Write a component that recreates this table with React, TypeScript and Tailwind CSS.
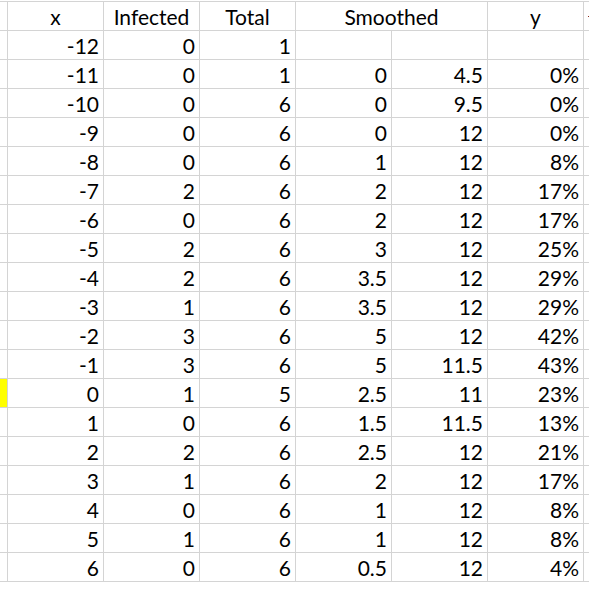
const rows: [number, number, number, string, string, string][] = [
  [-12, 0, 1, '', '', ''],
  [-11, 0, 1, '0', '4.5', '0%'],
  [-10, 0, 6, '0', '9.5', '0%'],
  [-9, 0, 6, '0', '12', '0%'],
  [-8, 0, 6, '1', '12', '8%'],
  [-7, 2, 6, '2', '12', '17%'],
  [-6, 0, 6, '2', '12', '17%'],
  [-5, 2, 6, '3', '12', '25%'],
  [-4, 2, 6, '3.5', '12', '29%'],
  [-3, 1, 6, '3.5', '12', '29%'],
  [-2, 3, 6, '5', '12', '42%'],
  [-1, 3, 6, '5', '11.5', '43%'],
  [0, 1, 5, '2.5', '11', '23%'],
  [1, 0, 6, '1.5', '11.5', '13%'],
  [2, 2, 6, '2.5', '12', '21%'],
  [3, 1, 6, '2', '12', '17%'],
  [4, 0, 6, '1', '12', '8%'],
  [5, 1, 6, '1', '12', '8%'],
  [6, 0, 6, '0.5', '12', '4%'],
];

function Cell({ value }: { value: string | number }) {
  return (
    <div className="w-[96px] shrink-0 border-r border-[#d4d4d4] flex items-center justify-end pr-[4px] pt-px">
      {value}
    </div>
  );
}

export default function App() {
  return (
    <div
      className="w-[589px] h-[589px] overflow-hidden bg-white text-black text-[21px]"
      style={{ fontFamily: 'Lato, "Open Sans", sans-serif' }}
    >
      <div className="h-px" />
      {/* header row */}
      <div className="flex h-[30px] border-t border-b border-[#d4d4d4]">
        <div className="w-[8px] shrink-0 border-r border-[#d4d4d4]" />
        <div className="w-[96px] shrink-0 border-r border-[#d4d4d4] flex items-center justify-center pt-px">x</div>
        <div className="w-[96px] shrink-0 border-r border-[#d4d4d4] flex items-center justify-center pt-px">Infected</div>
        <div className="w-[96px] shrink-0 border-r border-[#d4d4d4] flex items-center justify-center pt-px">Total</div>
        <div className="w-[192px] shrink-0 border-r border-[#d4d4d4] flex items-center justify-center pt-px">Smoothed</div>
        <div className="w-[96px] shrink-0 border-r border-[#d4d4d4] flex items-center justify-center pt-px">y</div>
        <div className="flex-1 flex items-center pl-[4px]">
          <div className="w-[2px] h-px bg-[#8a2a1a]" />
        </div>
      </div>
      {rows.map((r) => (
        <div key={r[0]} className="flex h-[29px] border-b border-[#d4d4d4]">
          <div
            className={
              r[0] === 0
                ? 'w-[8px] shrink-0 border-r border-[#d4d4d4] bg-[#ffff00]'
                : 'w-[8px] shrink-0 border-r border-[#d4d4d4]'
            }
          />
          <Cell value={r[0]} />
          <Cell value={r[1]} />
          <Cell value={r[2]} />
          <Cell value={r[3]} />
          <Cell value={r[4]} />
          <Cell value={r[5]} />
          <div className="flex-1" />
        </div>
      ))}
    </div>
  );
}
